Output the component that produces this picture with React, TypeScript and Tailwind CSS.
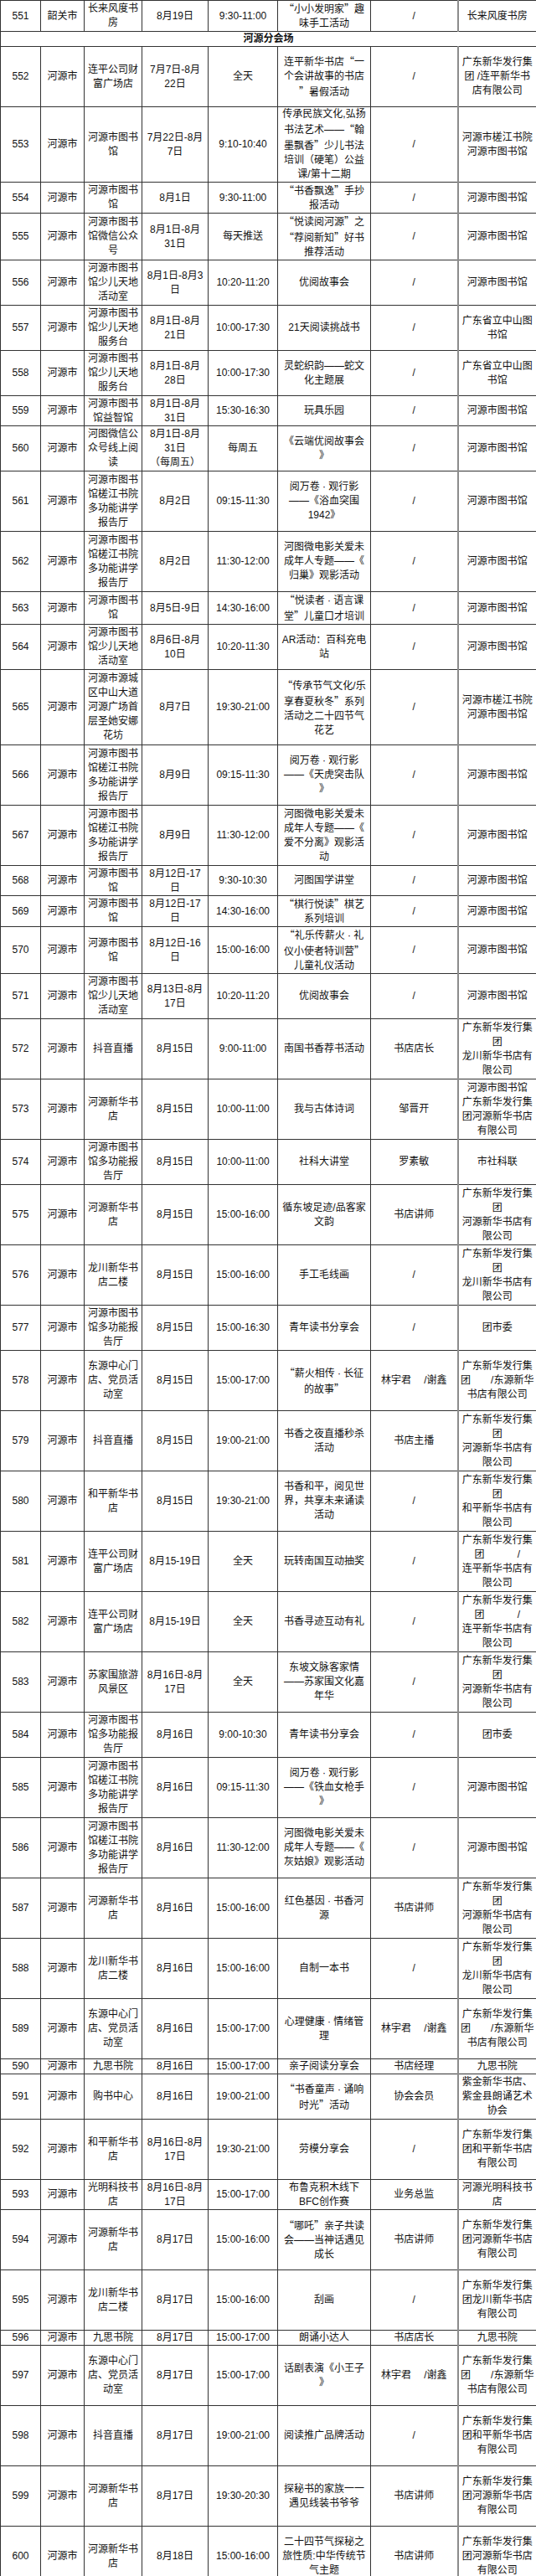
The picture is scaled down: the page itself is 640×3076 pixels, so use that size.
import React from "react";

type Row = { n: string; h: number; c: string[] };

const rowH: Record<number, string> = {
  1: "h-[18px]",
  2: "h-[36px]",
  3: "h-[54px]",
  4: "h-[72px]",
  5: "h-[90px]",
};

const HY = "河源市";
const LIB = "河源市图书馆";
const CJ = "河源市图书|馆槎江书院|多功能讲学|报告厅";
const DY = "东源中心门|店、党员活|动室";
const LQ = "林宇君\u3000 /谢鑫";
const DYORG = "广东新华发行集|团\u3000\u3000/东源新华|书店有限公司";
const HYORG = "广东新华发行集|团|河源新华书店有|限公司";
const LCORG = "广东新华发行集|团|龙川新华书店有|限公司";
const LPORG = "广东新华发行集|团\u3000\u3000\u3000 /|连平新华书店有|限公司";

const rows: Row[] = [
  { n: "552", h: 4, c: [HY, "连平公司财|富广场店", "7月7日-8月|22日", "全天", "连平新华书店“一|个会讲故事的书店|”暑假活动", "/", "广东新华发行集|团 /连平新华书|店有限公司"] },
  { n: "553", h: 5, c: [HY, "河源市图书|馆", "7月22日-8月|7日", "9:10-10:40", "传承民族文化,弘扬|书法艺术——“翰|墨飘香”少儿书法|培训（硬笔）公益|课/第十二期", "/", "河源市槎江书院|河源市图书馆"] },
  { n: "554", h: 2, c: [HY, "河源市图书|馆", "8月1日", "9:30-11:00", "“书香飘逸”手抄|报活动", "/", LIB] },
  { n: "555", h: 3, c: [HY, "河源市图书|馆微信公众|号", "8月1日-8月|31日", "每天推送", "“悦读阅河源”之|“荐阅新知”好书|推荐活动", "/", LIB] },
  { n: "556", h: 3, c: [HY, "河源市图书|馆少儿天地|活动室", "8月1日-8月3|日", "10:20-11:20", "优阅故事会", "/", LIB] },
  { n: "557", h: 3, c: [HY, "河源市图书|馆少儿天地|服务台", "8月1日-8月|21日", "10:00-17:30", "21天阅读挑战书", "/", "广东省立中山图|书馆"] },
  { n: "558", h: 3, c: [HY, "河源市图书|馆少儿天地|服务台", "8月1日-8月|28日", "10:00-17:30", "灵蛇织韵——蛇文|化主题展", "/", "广东省立中山图|书馆"] },
  { n: "559", h: 2, c: [HY, "河源市图书|馆益智馆", "8月1日-8月|31日", "15:30-16:30", "玩具乐园", "/", LIB] },
  { n: "560", h: 3, c: [HY, "河图微信公|众号线上阅|读", "8月1日-8月|31日|（每周五）", "每周五", "《云端优阅故事会|》", "/", LIB] },
  { n: "561", h: 4, c: [HY, CJ, "8月2日", "09:15-11:30", "阅万卷 · 观行影|——《浴血突围|1942》", "/", LIB] },
  { n: "562", h: 4, c: [HY, CJ, "8月2日", "11:30-12:00", "河图微电影关爱未|成年人专题——《|归巢》观影活动", "/", LIB] },
  { n: "563", h: 2, c: [HY, "河源市图书|馆", "8月5日-9日", "14:30-16:00", "“悦读者 · 语言课|堂”儿童口才培训", "/", LIB] },
  { n: "564", h: 3, c: [HY, "河源市图书|馆少儿天地|活动室", "8月6日-8月|10日", "10:20-11:30", "AR活动：百科充电|站", "/", LIB] },
  { n: "565", h: 5, c: [HY, "河源市源城|区中山大道|河源广场首|层圣她安娜|花坊", "8月7日", "19:30-21:00", "“传承节气文化/乐|享春夏秋冬”系列|活动之二十四节气|花艺", "/", "河源市槎江书院|河源市图书馆"] },
  { n: "566", h: 4, c: [HY, CJ, "8月9日", "09:15-11:30", "阅万卷 · 观行影|——《天虎突击队|》", "/", LIB] },
  { n: "567", h: 4, c: [HY, CJ, "8月9日", "11:30-12:00", "河图微电影关爱未|成年人专题——《|爱不分离》观影活|动", "/", LIB] },
  { n: "568", h: 2, c: [HY, "河源市图书|馆", "8月12日-17|日", "9:30-10:30", "河图国学讲堂", "/", LIB] },
  { n: "569", h: 2, c: [HY, "河源市图书|馆", "8月12日-17|日", "14:30-16:00", "“棋行悦读”棋艺|系列培训", "/", LIB] },
  { n: "570", h: 3, c: [HY, "河源市图书|馆", "8月12日-16|日", "15:00-16:00", "“礼乐传薪火 · 礼|仪小使者特训营”|儿童礼仪活动", "/", LIB] },
  { n: "571", h: 3, c: [HY, "河源市图书|馆少儿天地|活动室", "8月13日-8月|17日", "10:20-11:20", "优阅故事会", "/", LIB] },
  { n: "572", h: 4, c: [HY, "抖音直播", "8月15日", "9:00-11:00", "南国书香荐书活动", "书店店长", LCORG] },
  { n: "573", h: 4, c: [HY, "河源新华书|店", "8月15日", "10:00-11:00", "我与古体诗词", "邹晋开", "河源市图书馆|广东新华发行集|团河源新华书店|有限公司"] },
  { n: "574", h: 3, c: [HY, "河源市图书|馆多功能报|告厅", "8月15日", "10:00-11:00", "社科大讲堂", "罗素敏", "市社科联"] },
  { n: "575", h: 4, c: [HY, "河源新华书|店", "8月15日", "15:00-16:00", "循东坡足迹/品客家|文韵", "书店讲师", HYORG] },
  { n: "576", h: 4, c: [HY, "龙川新华书|店二楼", "8月15日", "15:00-16:00", "手工毛线画", "/", LCORG] },
  { n: "577", h: 3, c: [HY, "河源市图书|馆多功能报|告厅", "8月15日", "15:00-16:30", "青年读书分享会", "/", "团市委"] },
  { n: "578", h: 4, c: [HY, DY, "8月15日", "15:00-17:00", "“薪火相传 · 长征|的故事”", LQ, DYORG] },
  { n: "579", h: 4, c: [HY, "抖音直播", "8月15日", "19:00-21:00", "书香之夜直播秒杀|活动", "书店主播", HYORG] },
  { n: "580", h: 4, c: [HY, "和平新华书|店", "8月15日", "19:30-21:00", "书香和平，阅见世|界，共享未来诵读|活动", "/", "广东新华发行集|团|和平新华书店有|限公司"] },
  { n: "581", h: 4, c: [HY, "连平公司财|富广场店", "8月15-19日", "全天", "玩转南国互动抽奖", "/", LPORG] },
  { n: "582", h: 4, c: [HY, "连平公司财|富广场店", "8月15-19日", "全天", "书香寻迹互动有礼", "/", LPORG] },
  { n: "583", h: 4, c: [HY, "苏家围旅游|风景区", "8月16日-8月|17日", "全天", "东坡文脉客家情|——苏家围文化嘉|年华", "/", HYORG] },
  { n: "584", h: 3, c: [HY, "河源市图书|馆多功能报|告厅", "8月16日", "9:00-10:30", "青年读书分享会", "/", "团市委"] },
  { n: "585", h: 4, c: [HY, CJ, "8月16日", "09:15-11:30", "阅万卷 · 观行影|——《铁血女枪手|》", "/", LIB] },
  { n: "586", h: 4, c: [HY, CJ, "8月16日", "11:30-12:00", "河图微电影关爱未|成年人专题——《|灰姑娘》观影活动", "/", LIB] },
  { n: "587", h: 4, c: [HY, "河源新华书|店", "8月16日", "15:00-16:00", "红色基因 · 书香河|源", "书店讲师", HYORG] },
  { n: "588", h: 4, c: [HY, "龙川新华书|店二楼", "8月16日", "15:00-16:00", "自制一本书", "/", LCORG] },
  { n: "589", h: 4, c: [HY, DY, "8月16日", "15:00-17:00", "心理健康 · 情绪管|理", LQ, DYORG] },
  { n: "590", h: 1, c: [HY, "九思书院", "8月16日", "15:00-17:00", "亲子阅读分享会", "书店经理", "九思书院"] },
  { n: "591", h: 3, c: [HY, "购书中心", "8月16日", "19:00-21:00", "“书香童声 · 诵响|时光”活动", "协会会员", "紫金新华书店、|紫金县朗诵艺术|协会"] },
  { n: "592", h: 4, c: [HY, "和平新华书|店", "8月16日-8月|17日", "19:30-21:00", "劳模分享会", "/", "广东新华发行集|团和平新华书店|有限公司"] },
  { n: "593", h: 2, c: [HY, "光明科技书|店", "8月16日-8月|17日", "15:00-17:00", "布鲁克积木线下|BFC创作赛", "业务总监", "河源光明科技书|店"] },
  { n: "594", h: 4, c: [HY, "河源新华书|店", "8月17日", "15:00-16:00", "“哪吒”亲子共读|会——当神话遇见|成长", "书店讲师", "广东新华发行集|团河源新华书店|有限公司"] },
  { n: "595", h: 4, c: [HY, "龙川新华书|店二楼", "8月17日", "15:00-16:00", "刮画", "/", "广东新华发行集|团龙川新华书店|有限公司"] },
  { n: "596", h: 1, c: [HY, "九思书院", "8月17日", "15:00-17:00", "朗诵小达人", "书店店长", "九思书院"] },
  { n: "597", h: 4, c: [HY, DY, "8月17日", "15:00-17:00", "话剧表演《小王子|》", LQ, DYORG] },
  { n: "598", h: 4, c: [HY, "抖音直播", "8月17日", "19:00-21:00", "阅读推广品牌活动", "/", "广东新华发行集|团和平新华书店|有限公司"] },
  { n: "599", h: 4, c: [HY, "河源新华书|店", "8月17日", "19:30-20:30", "探秘书的家族一一|遇见线装书爷爷", "书店讲师", "广东新华发行集|团河源新华书店|有限公司"] },
  { n: "600", h: 4, c: [HY, "河源新华书|店", "8月18日", "15:00-16:00", "二十四节气探秘之|旅性质:中华传统节|气主题", "书店讲师", "广东新华发行集|团河源新华书店|有限公司"] },
];

// full-width CJK quotes come from the CJK font, like the source sheet
function withQuotes(line: string) {
  return line.split(/([“”])/).map((part, i) =>
    part === "“" || part === "”" ? (
      <span key={i} className="font-['Noto_Sans_CJK_SC']">
        {part}
      </span>
    ) : (
      part
    )
  );
}

function Cell({ text, last }: { text: string; last?: boolean }) {
  return (
    <td
      className={
        "border border-[#333] p-0 text-center align-middle " +
        (last ? "border-l-2 border-l-[#8c8c8c]" : "")
      }
    >
      {text.split("|").map((l, i) => (
        <div key={i} className="whitespace-pre">
          {withQuotes(l)}
        </div>
      ))}
    </td>
  );
}

function DataRow({ row }: { row: Row }) {
  return (
    <tr className={rowH[row.h]}>
      <Cell text={row.n} />
      {row.c.map((t, i) => (
        <Cell key={i} text={t} last={i === 6} />
      ))}
    </tr>
  );
}

export default function App() {
  return (
    <div className="w-[640px] bg-white text-[12px] leading-[17px] text-[#111] font-['Liberation_Sans','Noto_Sans_CJK_SC',sans-serif]">
      <table className="w-[640px] table-fixed border-collapse">
        <colgroup>
          <col className="w-[48px]" />
          <col className="w-[52px]" />
          <col className="w-[69px]" />
          <col className="w-[79px]" />
          <col className="w-[83px]" />
          <col className="w-[111px]" />
          <col className="w-[104px]" />
          <col className="w-[94px]" />
        </colgroup>
        <tbody>
          <DataRow
            row={{ n: "551", h: 2, c: ["韶关市", "长来风度书|房", "8月19日", "9:30-11:00", "“小小发明家”趣|味手工活动", "/", "长来风度书房"] }}
          />
          <tr className="h-[18px]">
            <td colSpan={8} className="border border-[#333] p-0 text-center align-middle font-bold">
              河源分会场
            </td>
          </tr>
          {rows.map((r) => (
            <DataRow key={r.n} row={r} />
          ))}
        </tbody>
      </table>
    </div>
  );
}
